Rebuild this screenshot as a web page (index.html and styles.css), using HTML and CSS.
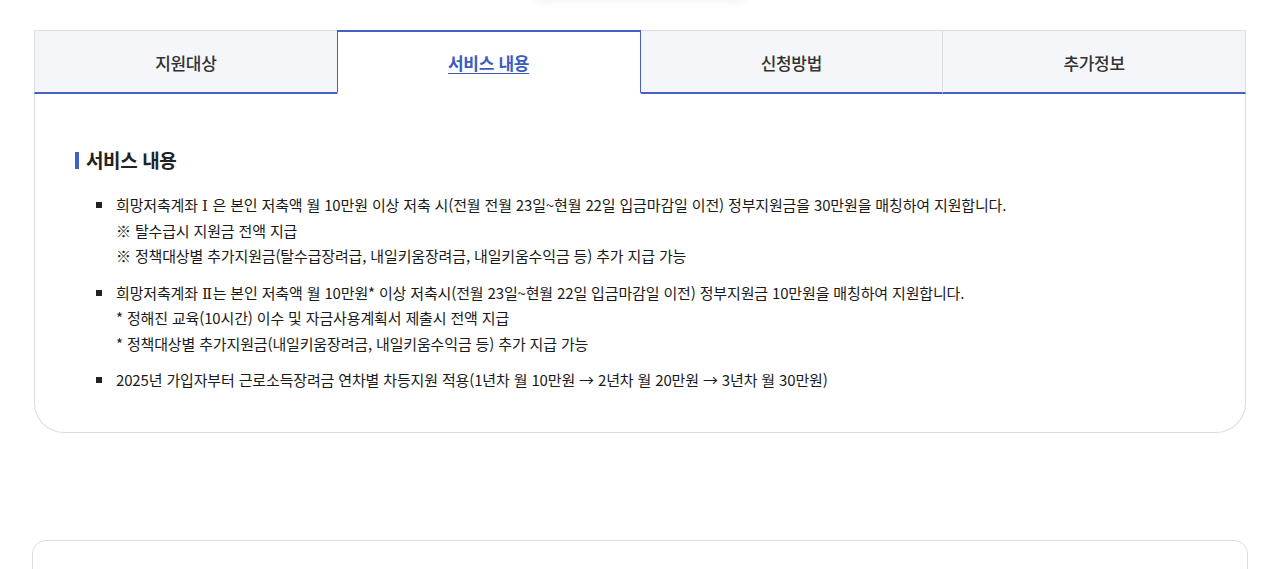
FILE: index.html
```html
<!DOCTYPE html>
<html lang="ko">
<head>
<meta charset="utf-8">
<title>서비스 내용</title>
<link rel="stylesheet" href="styles.css">
</head>
<body>
<div class="float-shadow"></div>
<main class="page">
  <section class="tabbox">
    <ul class="tabs">
      <li class="tab">지원대상</li>
      <li class="tab active"><a href="#">서비스 내용</a></li>
      <li class="tab">신청방법</li>
      <li class="tab">추가정보</li>
    </ul>
    <div class="panel">
      <h2 class="title">서비스 내용</h2>
      <ul class="list">
        <li class="item">
          <p>희망저축계좌 <span class="roman">Ⅰ</span> 은 본인 저축액 월 10만원 이상 저축 시(전월 전월 23일~현월 22일 입금마감일 이전) 정부지원금을 30만원을 매칭하여 지원합니다.</p>
          <p>※ 탈수급시 지원금 전액 지급</p>
          <p>※ 정책대상별 추가지원금(탈수급장려급, 내일키움장려금, 내일키움수익금 등) 추가 지급 가능</p>
        </li>
        <li class="item">
          <p>희망저축계좌 <span class="roman">Ⅱ</span>는 본인 저축액 월 10만원* 이상 저축시(전월 23일~현월 22일 입금마감일 이전) 정부지원금 10만원을 매칭하여 지원합니다.</p>
          <p>* 정해진 교육(10시간) 이수 및 자금사용계획서 제출시 전액 지급</p>
          <p>* 정책대상별 추가지원금(내일키움장려금, 내일키움수익금 등) 추가 지급 가능</p>
        </li>
        <li class="item">
          <p>2025년 가입자부터 근로소득장려금 연차별 차등지원 적용(1년차 월 10만원 → 2년차 월 20만원 → 3년차 월 30만원)</p>
        </li>
      </ul>
    </div>
  </section>
  <section class="card"></section>
</main>
</body>
</html>
```
FILE: styles.css
```css
* { box-sizing: border-box; }
html, body { margin: 0; padding: 0; background: #fff; }
body {
  font-family: "Noto Sans CJK KR", "Noto Sans", sans-serif;
  color: #222;
  overflow: hidden;
  height: 569px;
  position: relative;
}
.float-shadow {
  position: absolute;
  top: -40px;
  left: 525px;
  width: 230px;
  height: 40px;
  border-radius: 20px;
  background: #fff;
  box-shadow: 0 2px 10px rgba(0, 0, 0, 0.05);
}
.page {
  padding: 30px 24px 0 34px;
  display: flex;
  flex-direction: column;
}
.tabbox { width: 1212px; }
.tabs {
  list-style: none;
  margin: 0;
  padding: 0;
  display: flex;
  height: 64px;
}
.tab {
  flex: 1;
  display: flex;
  align-items: center;
  justify-content: center;
  background: #f5f6fa;
  border-top: 1px solid #dcdde2;
  border-left: 1px solid #dcdde2;
  border-bottom: 2px solid #4261c2;
  font-size: 17px;
  font-weight: 500;
  color: #333;
  letter-spacing: -0.3px;
  padding-top: 2px;
}
.tab:last-child { border-right: 1px solid #dcdde2; }
.tab.active {
  background: #fff;
  border-top: 2px solid #4261c2;
  border-left: 1px solid #4261c2;
  border-right: 1px solid #4261c2;
  border-bottom: 2px solid transparent;
  padding-top: 0;
}
.tab.active + .tab { border-left: none; }
.tab.active a {
  color: #3d5cc0;
  text-decoration: underline;
  text-underline-offset: 3px;
  text-decoration-thickness: 1px;
  font-weight: 700;
}
.panel {
  border: 1px solid #dcdde2;
  border-top: none;
  border-radius: 0 0 30px 30px;
  padding: 52px 40px 39px 40px;
}
.title {
  margin: 0;
  font-size: 19px;
  font-weight: 700;
  line-height: 28px;
  color: #222;
  letter-spacing: -0.4px;
  display: flex;
  align-items: center;
  gap: 7px;
}
.title::before {
  content: "";
  width: 4px;
  height: 17px;
  background: #4261c2;
}
.list {
  list-style: none;
  margin: 18px 0 0;
  padding: 0 0 0 21px;
  display: flex;
  flex-direction: column;
  gap: 11px;
}
.item {
  position: relative;
  padding-left: 20px;
  font-size: 15px;
  line-height: 25.5px;
  color: #1a1a1a;
  letter-spacing: -0.15px;
}
.item::before {
  content: "";
  position: absolute;
  left: 0;
  top: 10px;
  width: 6px;
  height: 6px;
  background: #222;
}
.item p { margin: 0; }
.roman {
  font-family: "DejaVu Serif", "Liberation Serif", serif;
  font-size: 15px;
  line-height: 1;
  letter-spacing: 0.5px;
}
.card {
  margin-top: 107px;
  margin-left: -2px;
  width: 1216px;
  height: 60px;
  border: 1px solid #dcdde2;
  border-radius: 14px;
}
```
